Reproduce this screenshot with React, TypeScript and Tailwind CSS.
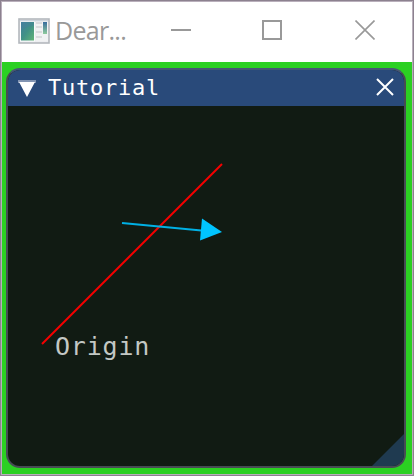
import React from "react";

function AppIcon() {
  return (
    <svg width="32" height="26" viewBox="0 0 32 26" className="mt-0.5 shrink-0">
      <defs>
        <linearGradient id="pane" x1="0" y1="0" x2="1" y2="1">
          <stop offset="0" stopColor="#427f9d" />
          <stop offset="0.5" stopColor="#419286" />
          <stop offset="1" stopColor="#62b477" />
        </linearGradient>
        <linearGradient id="bar" x1="0" y1="0" x2="0" y2="1">
          <stop offset="0" stopColor="#386c9d" />
          <stop offset="1" stopColor="#8fcb9c" />
        </linearGradient>
      </defs>
      <rect x="1" y="1" width="30" height="24" fill="#e8ebee" stroke="#b4b8bd" strokeWidth="1.6" />
      <rect x="2" y="2" width="28" height="1.5" fill="#ccd4dc" />
      <rect x="2" y="3.5" width="15" height="20" fill="#f9fbfb" />
      <rect x="3" y="4" width="13" height="18.5" fill="url(#pane)" />
      <path d="M3 13 Q7 8 16 8 V4 H3Z" fill="#477da0" opacity=".35" />
      <rect x="17.5" y="3.5" width="12.5" height="20" fill="#f1f2f3" />
      <path d="M18 5h6M18 9h6M18 14h6M18 19h6" stroke="#d2d5d8" strokeWidth="1.6" />
      <rect x="25" y="4" width="4" height="12" fill="url(#bar)" />
    </svg>
  );
}

function TitleBar() {
  return (
    <header className="flex h-[60px] shrink-0 items-start bg-white pl-4 pt-3.5 text-[#999]">
      <AppIcon />
      <span className="ml-[5px] mt-[-1px] w-[88px] shrink-0 font-['Open_Sans','Noto_Sans',sans-serif] text-[25px] leading-[31px] tracking-[-0.7px]">
        Dear...
      </span>
      <svg width="20" height="20" className="ml-[28px] mt-1 shrink-0" stroke="#999" strokeWidth="2">
        <path d="M0 10H20" />
      </svg>
      <svg width="20" height="20" className="ml-[71px] mt-1 shrink-0" fill="none" stroke="#999" strokeWidth="2">
        <path d="M1 1H19V19H1Z" />
      </svg>
      <svg width="20" height="20" className="ml-[73px] mt-1 shrink-0" stroke="#999" strokeWidth="1.6">
        <path d="M.5.5L19.5 19.5M19.5.5L.5 19.5" />
      </svg>
    </header>
  );
}

function Canvas() {
  return (
    <div className="relative h-[360px] w-[396px]">
      <svg width="396" height="360" viewBox="8 106 396 360" className="block">
        <path d="M42 344L222 164" stroke="#f50000" strokeWidth="2" />
        <path d="M122 223L204 230.8" stroke="#00b0e4" strokeWidth="2" />
        <path d="M202 218.5L222 232L200 240.5Z" fill="#00c4ff" />
        <path d="M404 434V466H372Z" fill="#1f3a50" />
      </svg>
      <span className="absolute left-[47px] top-[225px] font-['DejaVu_Sans_Mono',monospace] text-[25px] leading-[32px] tracking-[0.8px] text-[#c3c8c4]">
        Origin
      </span>
    </div>
  );
}

export default function App() {
  return (
    <div className="flex h-[476px] w-[414px] flex-col border border-[#8c818f] bg-[#b9afbb] p-px">
      <TitleBar />
      <main className="flex grow bg-[#2bd022] pl-1 pt-1.5">
        <section className="h-[400px] w-[400px] overflow-hidden rounded-[14px] border-2 border-[#474b54] border-t-[#465574] bg-[#111b13]">
          <div className="flex h-9 items-center bg-[#294a7a] px-2.5">
            <svg width="18" height="17" viewBox="0 0 18 17" className="shrink-0">
              <path d="M0 0H18V3H0Z" fill="#8294b2" />
              <path d="M1 2H17L9 17Z" fill="#fff" />
            </svg>
            <h1 className="ml-3 font-['DejaVu_Sans_Mono',monospace] text-[22px] leading-[32px] tracking-[0.75px] text-white">
              Tutorial
            </h1>
            <svg width="18" height="18" className="ml-auto -mt-0.5" stroke="#fff" strokeWidth="2">
              <path d="M1 1L17 17M17 1L1 17" />
            </svg>
          </div>
          <Canvas />
        </section>
      </main>
    </div>
  );
}
